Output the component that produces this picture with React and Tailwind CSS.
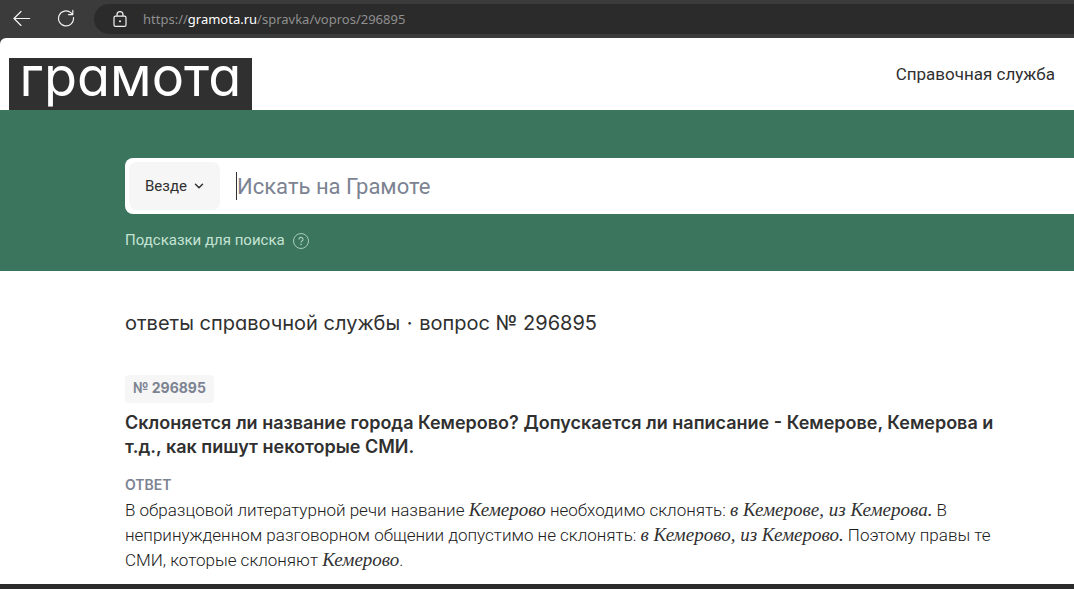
import { ChevronDown } from 'lucide-react';

const question = {
  number: '296895',
  title:
    'Склоняется ли название города Кемерово? Допускается ли написание - Кемерове, Кемерова и т.д., как пишут некоторые СМИ.',
};

const BackIcon = () => (
  <svg width="18" height="16" viewBox="0 0 18 16" fill="none" stroke="#f2f2f2" strokeWidth="1.2">
    <path d="M16.6 8.5H1.2M8 1.5l-7 7 7 7" strokeLinecap="round" strokeLinejoin="round" />
  </svg>
);

const ReloadIcon = () => (
  <svg width="18" height="18" viewBox="0 0 18 18" fill="none" stroke="#f2f2f2" strokeWidth="1.2">
    <path d="M16.5 8.6A7.5 7.5 0 1 1 13.8 3.6L15.6 5.5M15.8 1.4v4.2h-4.3" strokeLinecap="round" strokeLinejoin="round" />
  </svg>
);

const LockIcon = () => (
  <svg width="14" height="17" viewBox="0 0 14 17" fill="none" stroke="#f2f2f2" strokeWidth="1.2">
    <rect x="1" y="5.2" width="12" height="10.2" rx="1.5" />
    <path d="M4 5V3.6a3 3 0 0 1 6 0V5" />
    <circle cx="7" cy="10.3" r="1" fill="#f2f2f2" stroke="none" />
  </svg>
);

const HintIcon = () => (
  <svg width="16" height="16" viewBox="0 0 16 16" fill="none" stroke="#a6cbb9" strokeWidth="1">
    <circle cx="8" cy="8" r="7.5" />
    <path d="M6 6.4a2 2 0 1 1 3 1.7c-.7.4-1 .8-1 1.5" strokeWidth="1.2" />
    <circle cx="8" cy="11.4" r=".8" fill="#a6cbb9" stroke="none" />
  </svg>
);

const BrowserBar = () => (
  <div className="flex h-10 shrink-0 items-start bg-[#3b3b3b]">
    <button type="button" aria-label="Назад" className="ml-3 flex h-9 w-5 items-center justify-center">
      <BackIcon />
    </button>
    <button type="button" aria-label="Обновить" className="ml-6 flex h-9 w-5 items-center justify-center">
      <ReloadIcon />
    </button>
    <div className="mt-1 ml-[18px] flex h-[30px] flex-1 items-center rounded-l-full bg-[#2b2b2b] pl-[19px]">
      <LockIcon />
      <p className="ml-4 pt-0.5 font-['Noto_Sans',sans-serif] text-[13px] text-[#8f8f8f]">
        https://<span className="text-white">gramota.ru</span>/spravka/vopros/{question.number}
      </p>
    </div>
  </div>
);

const SiteHeader = () => (
  <header className="-mt-0.5 flex h-[72px] shrink-0 items-end justify-between rounded-tl-md bg-white pr-[19px] pl-[9px]">
    <a
      href="#"
      className="flex h-[52px] w-[243px] justify-center bg-[#303030] font-['Inter',sans-serif] text-[54px] leading-[38px] text-white [font-feature-settings:'cv11']"
    >
      грамота
    </a>
    <a href="#" className="mb-6 text-[17px] leading-6">
      Справочная служба
    </a>
  </header>
);

const SearchPanel = () => (
  <section className="shrink-0 bg-[#3b755e] pt-12 pb-5 pl-[125px]">
    <div className="flex h-14 items-center rounded-l-lg bg-white p-1">
      <label className="relative flex h-12 w-[91px] items-center rounded-lg bg-[#f6f6f6]">
        <select aria-label="Где искать" className="h-full w-full appearance-none pl-4 text-[15px]">
          <option>Везде</option>
        </select>
        <ChevronDown size={14} strokeWidth={2.5} className="pointer-events-none absolute right-3.5" />
      </label>
      <div className="ml-4 flex h-7 flex-1 items-center border-l border-[#303030] pt-0.5">
        <input
          type="text"
          aria-label="Поиск"
          placeholder="Искать на Грамоте"
          className="w-full text-[22px] leading-7 placeholder:text-[#7c8391] focus:outline-none"
        />
      </div>
    </div>
    <a href="#" className="mt-4 flex items-center gap-2 text-[15px] leading-[21px] text-[#c5e3d3]">
      Подсказки для поиска
      <HintIcon />
    </a>
  </section>
);

const Answer = () => (
  <main className="flex-1 bg-white pt-10 pr-[70px] pb-2 pl-[125px]">
    <h1 className="font-['Inter',sans-serif] text-[20px] leading-6 [font-feature-settings:'cv11']">
      ответы справочной службы <span className="mx-px">·</span> вопрос № {question.number}
    </h1>
    <p className="mt-10 w-fit rounded bg-[#f6f6f6] px-2 pb-0.5 font-['Inter',sans-serif] text-[14px] leading-[26px] font-bold text-[#7c8391]">
      № {question.number}
    </p>
    <h2 className="mt-2 font-['Inter',sans-serif] text-[18px] leading-6 font-semibold">{question.title}</h2>
    <h3 className="mt-4 font-['Inter',sans-serif] text-[14px] leading-5 font-semibold text-[#7c8391]">ОТВЕТ</h3>
    <p className="mt-[3px] text-[17px] leading-[25px] font-light text-[#202020] [&_em]:font-['Liberation_Serif',serif] [&_em]:text-[19px] [&_em]:leading-none [&_em]:font-normal [&_em]:text-[#303030]">
      В образцовой литературной речи название <em>Кемерово</em> необходимо склонять:{' '}
      <em>в Кемерове, из Кемерова.</em> В непринужденном разговорном общении допустимо не склонять:{' '}
      <em>в Кемерово, из Кемерово.</em> Поэтому правы те СМИ, которые склоняют <em>Кемерово</em>.
    </p>
  </main>
);

export default function App() {
  return (
    <div className="flex min-h-screen flex-col bg-[#3b3b3b] font-['Roboto',sans-serif] text-[#303030]">
      <BrowserBar />
      <SiteHeader />
      <SearchPanel />
      <Answer />
      <div className="h-[5px] shrink-0 bg-[#2b2b2b]" />
    </div>
  );
}
